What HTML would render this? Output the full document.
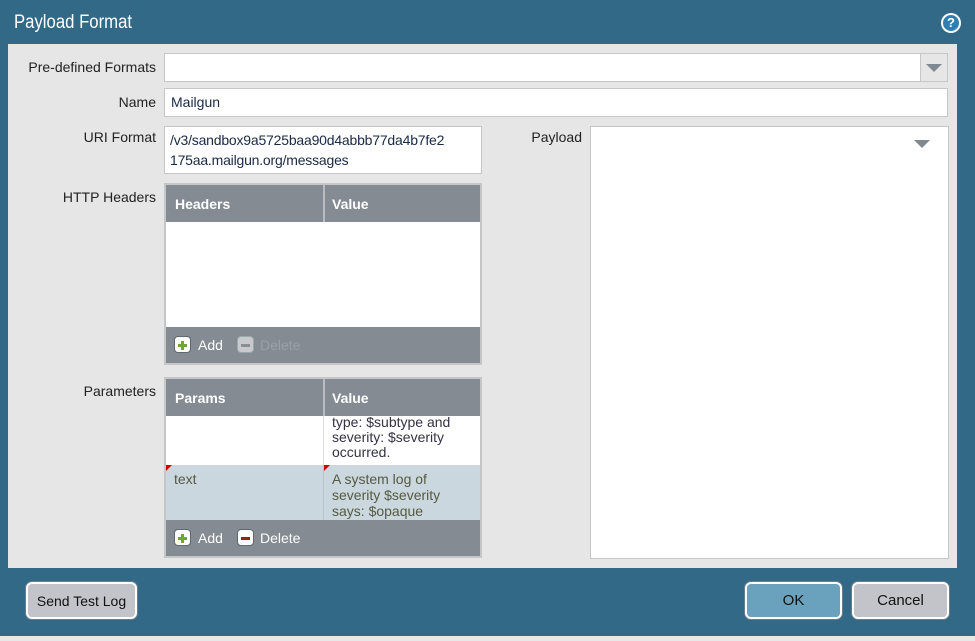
<!DOCTYPE html>
<html><head><style>
*{box-sizing:border-box;margin:0;padding:0}
body{width:975px;height:641px;background:#326987;font-family:"Liberation Sans",sans-serif;position:relative;overflow:hidden}
.a{position:absolute}
.title{left:14px;top:12px;color:#fff;font-size:19px;transform:scaleX(.88);transform-origin:left}
.panel{left:8px;top:44px;width:949px;height:524px;background:#e6e6e6}
.lbl{font-size:14px;color:#222;text-align:right;width:150px;left:6px}
.in{background:#fff;border:1px solid #c6c6c6;font-size:14px;color:#1a2a44;padding:5px 6px}
.tbl{border:2px solid #c4c6c8;background:#fff}
.hd{background:#848b92;color:#fff;font-weight:bold;font-size:14px;height:37px;position:absolute;left:0;right:0;top:0}
.ft{background:#848b92;height:36px;position:absolute;left:0;right:0;bottom:0;color:#fff;font-size:14px}
.ico{display:inline-block;width:17px;height:17px;border-radius:4px;background:#fff;position:absolute;top:9px;border:1px solid #5d6a72}
.btn{border:2px solid #fff;border-radius:6px;background:#c3c4ca;font-size:15px;color:#111;display:flex;align-items:center;justify-content:center;box-shadow:0 0 0 1px #6a7d8a}
.tri{width:0;height:0;border-left:8px solid transparent;border-right:8px solid transparent;border-top:8px solid #808890}
</style></head><body>
<div class="a" style="left:0;top:636px;width:975px;height:5px;background:#e8e8e8"></div>
<div class="a title">Payload Format</div>
<div class="a" style="left:941px;top:13px;width:20px;height:20px;border-radius:50%;background:#fff;"></div>
<div class="a" style="left:943px;top:15px;width:16px;height:16px;border-radius:50%;background:#2f7fb3;color:#fff;font-size:13px;font-weight:bold;text-align:center;line-height:16px">?</div>
<div class="a panel"></div>

<div class="a lbl" style="top:59px">Pre-defined Formats</div>
<div class="a in" style="left:164px;top:53px;width:784px;height:29px"></div>
<div class="a" style="left:920px;top:54px;width:27px;height:27px;background:#e6e6e6;border-left:1px solid #c6c6c6"></div>
<div class="a tri" style="left:926px;top:64px"></div>

<div class="a lbl" style="top:94px">Name</div>
<div class="a in" style="left:164px;top:88px;width:784px;height:29px">Mailgun</div>

<div class="a lbl" style="top:129px">URI Format</div>
<div class="a in" style="left:164px;top:126px;width:318px;height:48px;line-height:20px;padding:3px 5px;font-size:14px;white-space:nowrap;overflow:hidden;letter-spacing:-.2px">/v3/sandbox9a5725baa90d4abbb77da4b7fe2<br>175aa.mailgun.org/messages</div>

<div class="a lbl" style="top:129px;left:432px">Payload</div>
<div class="a in" style="left:590px;top:126px;width:359px;height:433px"></div>
<div class="a tri" style="left:914px;top:140px"></div>

<div class="a lbl" style="top:189px">HTTP Headers</div>
<div class="a tbl" style="left:164px;top:183px;width:318px;height:182px">
 <div class="hd"><span class="a" style="left:9px;top:11px">Headers</span><div class="a" style="left:157px;top:0;width:2px;height:37px;background:#b8bcc0"></div><span class="a" style="left:166px;top:11px">Value</span></div>
 <div class="ft"><div class="ico" style="left:8px;background:#fff"><span class="a" style="left:3px;top:7px;width:9px;height:3px;background:#6fa531"></span><span class="a" style="left:6px;top:4px;width:3px;height:9px;background:#6fa531"></span></div><span class="a" style="left:32px;top:10px">Add</span>
 <div class="ico" style="left:71px;background:#c8cacd;border-color:#9aa"><span class="a" style="left:3px;top:7px;width:9px;height:3px;background:#8a8f94"></span></div><span class="a" style="left:94px;top:10px;color:#9aa0a6">Delete</span></div>
</div>

<div class="a lbl" style="top:383px">Parameters</div>
<div class="a tbl" style="left:164px;top:377px;width:318px;height:181px">
 <div class="hd"><span class="a" style="left:9px;top:11px">Params</span><div class="a" style="left:157px;top:0;width:2px;height:37px;background:#b8bcc0"></div><span class="a" style="left:166px;top:11px">Value</span></div>
 <div class="a" style="left:0;right:0;top:37px;height:49px;background:#fff;overflow:hidden"><div class="a" style="left:157px;top:0;width:1px;height:49px;background:#ddd"></div><div class="a" style="left:166px;top:-1px;font-size:14px;line-height:15px;color:#334">type: $subtype and<br>severity: $severity<br>occurred.</div></div>
 <div class="a" style="left:0;right:0;top:86px;height:57px;background:#cbd7de"><div class="a" style="left:157px;top:0;width:1px;height:57px;background:#b5c6d0"></div>
 <div class="a" style="left:0;top:0;border-right:6px solid transparent;border-top:6px solid #c00"></div>
 <div class="a" style="left:158px;top:0;border-right:6px solid transparent;border-top:6px solid #c00"></div>
 <div class="a" style="left:8px;top:6px;font-size:14px;color:#555a40">text</div>
 <div class="a" style="left:166px;top:6px;font-size:14px;line-height:16px;color:#555a40">A system log of<br>severity $severity<br>says: $opaque</div></div>
 <div class="ft"><div class="ico" style="left:8px"><span class="a" style="left:3px;top:7px;width:9px;height:3px;background:#6fa531"></span><span class="a" style="left:6px;top:4px;width:3px;height:9px;background:#6fa531"></span></div><span class="a" style="left:32px;top:10px">Add</span>
 <div class="ico" style="left:71px"><span class="a" style="left:3px;top:7px;width:9px;height:3px;background:#8a2a10"></span></div><span class="a" style="left:94px;top:10px">Delete</span></div>
</div>

<div class="a btn" style="left:26px;top:582px;width:111px;height:37px;font-size:14px">Send Test Log</div>
<div class="a btn" style="left:745px;top:582px;width:97px;height:37px;background:#6aa2bd">OK</div>
<div class="a btn" style="left:852px;top:582px;width:97px;height:37px">Cancel</div>
</body></html>
